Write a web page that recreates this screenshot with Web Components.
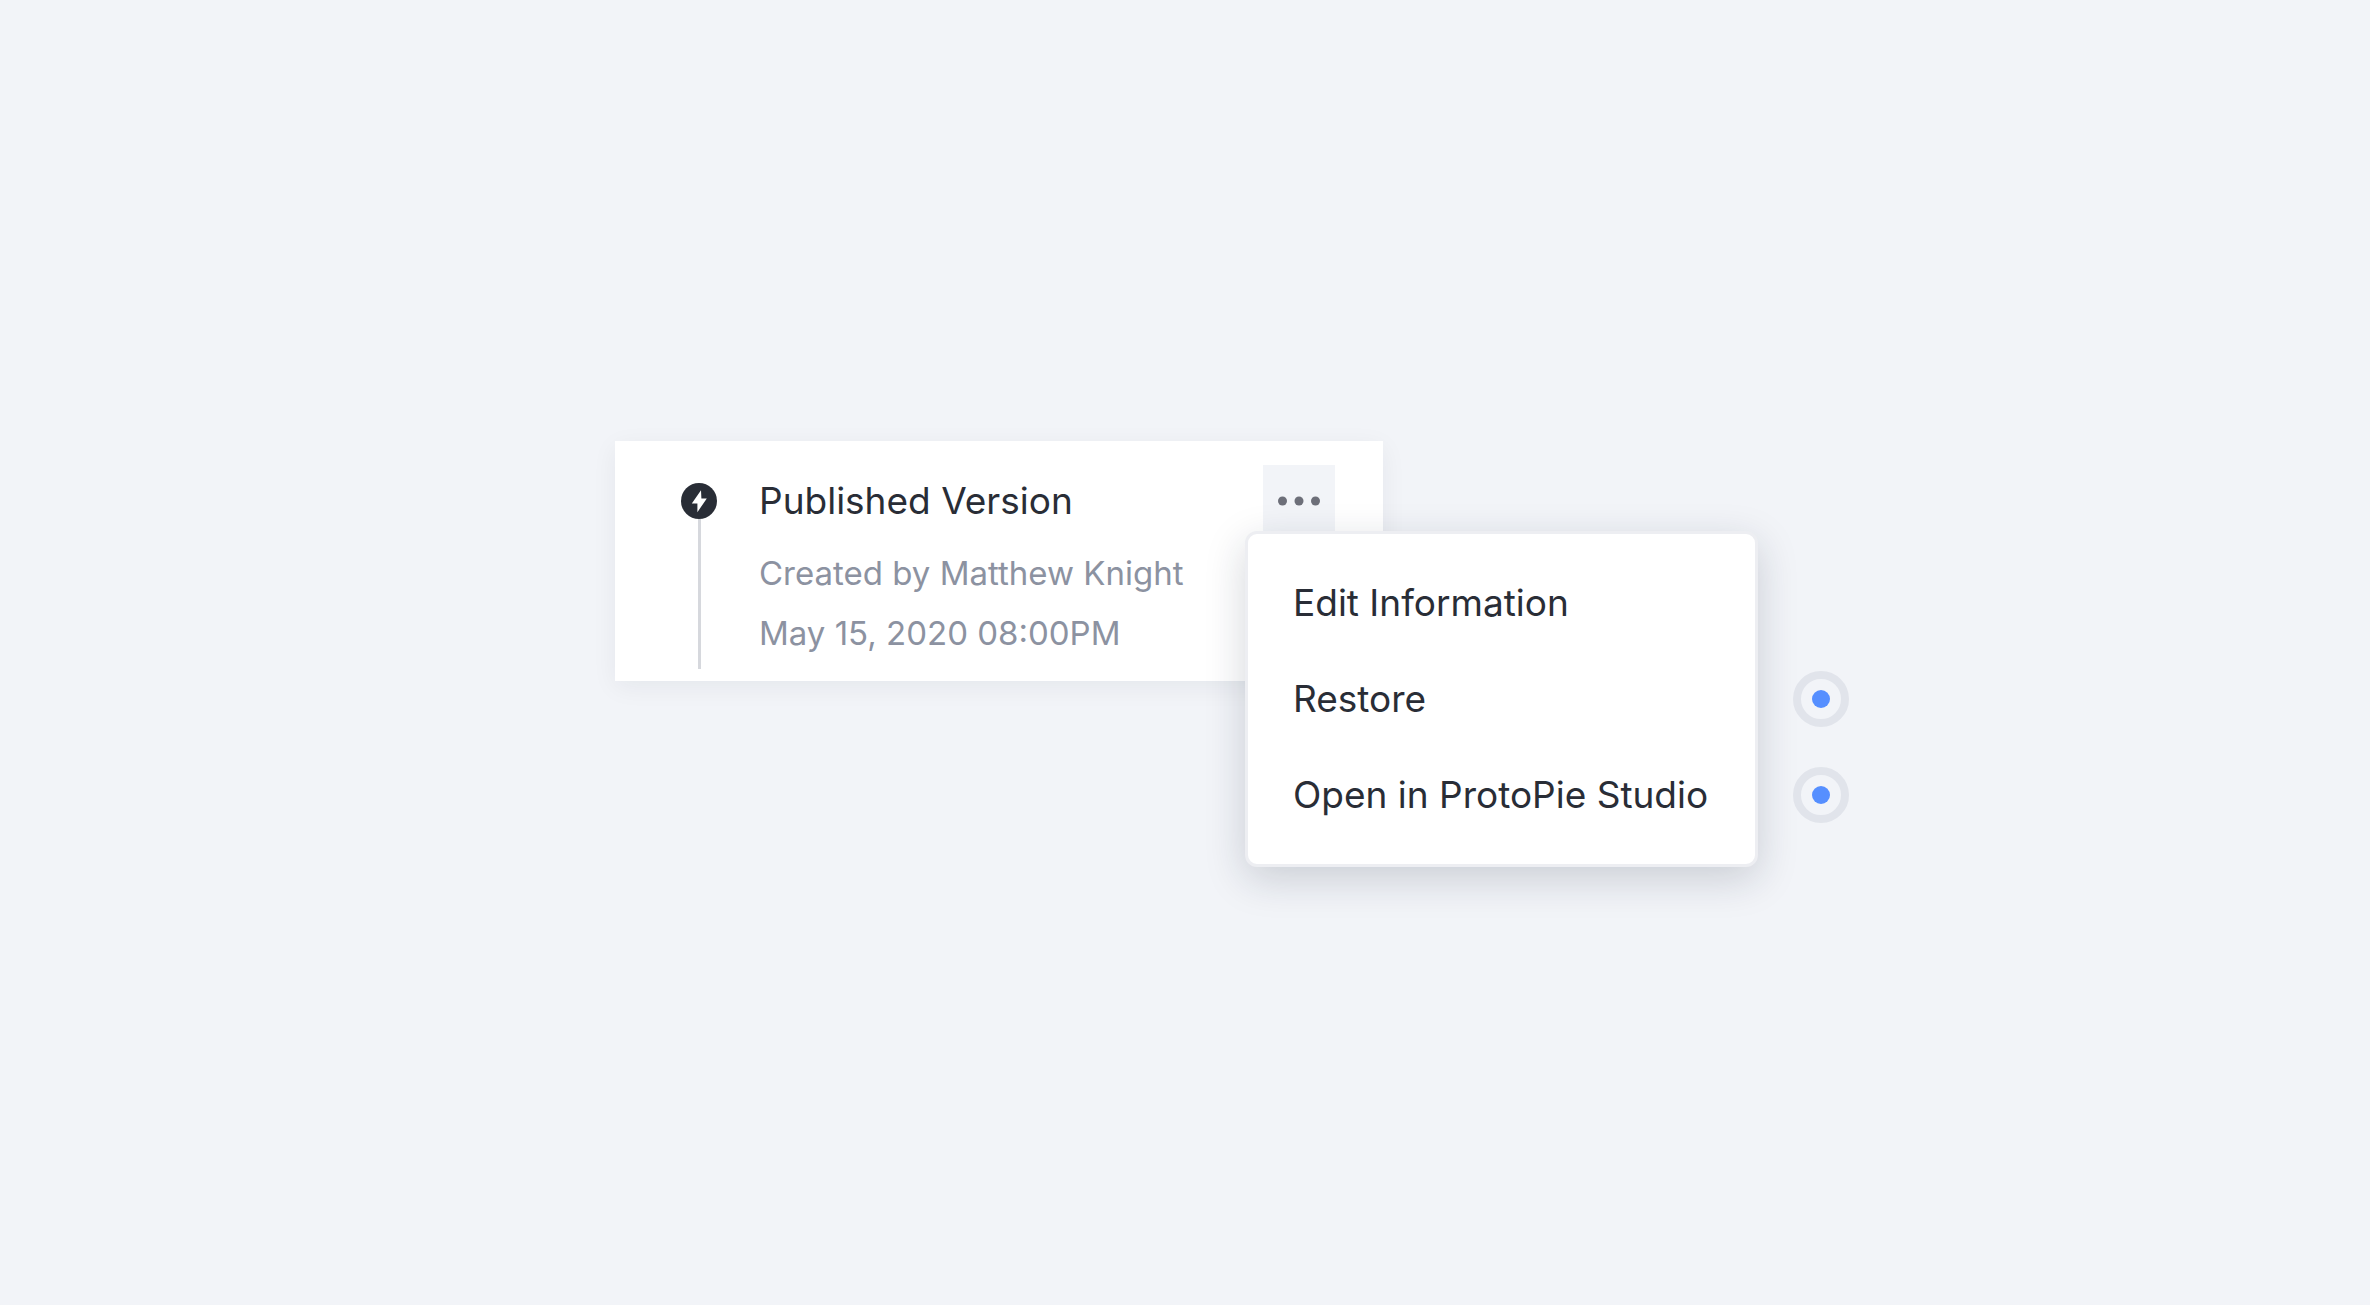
<!DOCTYPE html>
<html lang="en">
<head>
<meta charset="utf-8">
<title>Version history</title>
<style>
  body {
    margin: 0;
    min-height: 100vh;
    display: flex;
    align-items: center;
    justify-content: center;
    background: #f2f4f8;
    color: #292d36;
    font-family: Inter, "Liberation Sans", sans-serif;
  }
</style>
</head>
<body>
<version-stage>
  <version-card>
    <span slot="title">Published Version</span>
    <span slot="author">Created by Matthew Knight</span>
    <time slot="date" datetime="2020-05-15T20:00">May 15, 2020 08:00PM</time>
    <more-menu slot="actions">
      <menu-item>Edit Information</menu-item>
      <menu-item hint>Restore</menu-item>
      <menu-item hint>Open in ProtoPie Studio</menu-item>
    </more-menu>
  </version-card>
</version-stage>

<script>
const define = (name, html) => {
  const template = document.createElement('template');
  template.innerHTML = html;
  customElements.define(name, class extends HTMLElement {
    constructor() {
      super();
      this.attachShadow({ mode: 'open' }).append(template.content.cloneNode(true));
    }
  });
};

define('version-stage', `
  <style>
    :host { display: block; box-sizing: border-box; width: 1140px; max-width: 100%; min-height: 423px; }
  </style>
  <slot></slot>
`);

define('version-marker', `
  <style>
    :host { display: flex; flex-direction: column; align-items: center; width: 36px; }
    svg { display: block; flex: none; }
    i { flex: 1; width: 3px; background: #d6d8dd; }
  </style>
  <svg width="36" height="36" viewBox="0 0 36 36" aria-hidden="true">
    <circle cx="18" cy="18" r="18" fill="#292d36"/>
    <path d="M20 7.2 10.8 20.6H16.4V29.2L25.8 15.4H20.4Z" fill="#fff"/>
  </svg>
  <i></i>
`);

define('version-card', `
  <style>
    :host {
      display: flex; box-sizing: border-box; width: 768px; max-width: 100%;
      padding: 24px 48px 12px 66px; background: #fff;
      box-shadow: 0 6px 24px rgba(20, 30, 45, .06);
    }
    version-marker { margin: 18px 42px 0 0; }
    .text { flex: 1; display: flex; flex-direction: column; padding-bottom: 6px; white-space: nowrap; }
    h2 { margin: 0 0 6px; font-size: 37px; line-height: 72px; font-weight: 400; }
    p { margin: 0; font-size: 33px; line-height: 60px; color: #8c92a1; }
  </style>
  <version-marker></version-marker>
  <div class="text">
    <h2><slot name="title"></slot></h2>
    <p><slot name="author"></slot></p>
    <p><slot name="date"></slot></p>
  </div>
  <slot name="actions"></slot>
`);

define('more-menu', `
  <style>
    :host { display: block; position: relative; width: 72px; height: 72px; }
    button {
      display: flex; align-items: center; justify-content: center;
      width: 72px; height: 72px; padding: 0; border: 0; background: #f2f4f8;
    }
    .menu {
      position: absolute; top: 66px; left: -18px; box-sizing: border-box; width: 513px;
      padding: 21px 0; border: 3px solid #edeef2; border-radius: 12px; background: #fff;
      box-shadow: 0 12px 40px rgba(20, 35, 55, .18);
    }
  </style>
  <button type="button" aria-label="More actions" aria-expanded="true">
    <svg width="42" height="10" viewBox="0 0 42 10" fill="#6d6f79" aria-hidden="true">
      <circle cx="4.5" cy="5" r="4.5"/><circle cx="21" cy="5" r="4.5"/><circle cx="37.5" cy="5" r="4.5"/>
    </svg>
  </button>
  <div class="menu" role="menu"><slot></slot></div>
`);

define('menu-item', `
  <style>
    :host { display: block; position: relative; }
    button {
      display: block; width: 100%; height: 96px; padding: 0 0 0 45px; border: 0; background: none;
      color: inherit; font: inherit; font-size: 37px; line-height: 96px; text-align: left; white-space: nowrap;
    }
    .hint { display: none; }
    :host([hint]) .hint { display: block; position: absolute; top: 20px; left: calc(100% + 38px); }
  </style>
  <button type="button" role="menuitem"><slot></slot></button>
  <svg class="hint" width="56" height="56" viewBox="0 0 56 56" aria-hidden="true">
    <circle cx="28" cy="28" r="24" fill="none" stroke="#e1e4eb" stroke-width="8"/>
    <circle cx="28" cy="28" r="9" fill="#568fff"/>
  </svg>
`);
</script>
</body>
</html>
